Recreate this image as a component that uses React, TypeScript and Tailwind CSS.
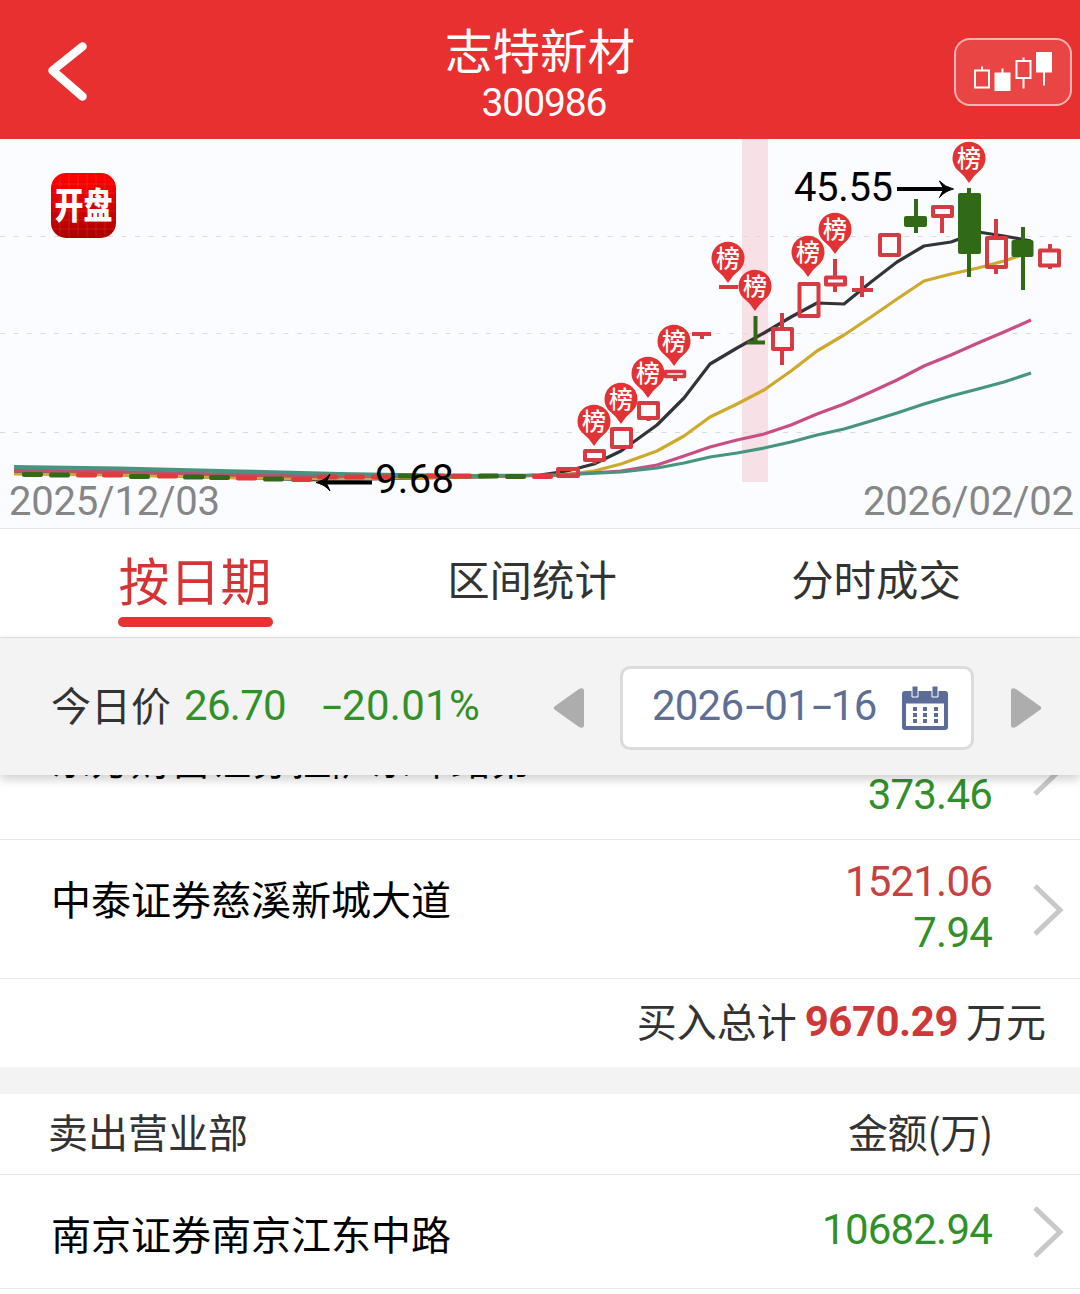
const CJK = "font-['Noto_Sans_CJK_SC',sans-serif]";

const MA_BLACK = '14,473 130,475 250,478 320,480 420,478 480,477 540,475 567,471 594,464 621,451 657,425 684,398 710,364 737,348 764,333 791,317 817,303 844,304 871,282 897,262 924,246 951,242 978,232 1004,236 1031,241';
const MA_GOLD = '14,474 120,475 240,478 340,479 460,477 560,475 594,471 621,464 657,451 684,436 710,417 737,404 764,390 791,371 817,351 844,335 871,317 897,299 924,281 951,274 978,268 1004,261 1031,252';
const MA_PINK = '14,470 120,471.5 240,474.5 340,476.5 460,476.5 560,475 621,471 657,465 684,456 710,447 737,440 764,434 791,425 817,414 844,404 871,392 897,380 924,366 951,355 978,343 1004,332 1031,320';
const MA_TEAL = '14,466.5 120,468 240,471 340,473.5 460,475.5 560,475 621,472 657,468 684,463 710,457 737,453 764,448 791,442 817,435 844,429 871,421 897,413 924,404 951,396 978,389 1004,382 1031,373';

const PINS = [
  [594, 421], [621, 399], [648, 373], [674, 341], [728, 258], [755, 286], [808, 252], [835, 229], [969, 158],
];

const DASHES: [number, number, number][] = [
  [22, 474.5, 0], [49, 475, 0], [76, 475, 1], [102, 475, 1], [129, 476.5, 0], [157, 476, 1], [183, 477, 0], [209, 477.5, 0],
  [236, 478, 1], [263, 479, 0], [291, 479.5, 1], [317, 477, 1], [344, 477, 1], [371, 477, 1], [398, 476, 0], [425, 476, 1], [451, 476, 1], [478, 476, 0], [505, 476.5, 0], [532, 476.5, 1],
];

function Chart() {
  return (
    <svg width="1080" height="389" viewBox="0 139 1080 389" className="block bg-[#fbfcff]">
      <rect x="742" y="139" width="26" height="343" fill="#f7e0e6" />
      <g stroke="#d9dade" strokeWidth="1" strokeDasharray="5 8.500">
        <path d="M0 236.500H1080M0 333.500H1080M0 432.500H1080" />
      </g>
      <g fill="none" strokeWidth="3.200" strokeLinejoin="round">
        <polyline points={MA_BLACK} stroke="#333338" />
        <polyline points={MA_GOLD} stroke="#cfa82c" />
        <polyline points={MA_PINK} stroke="#c94e86" />
        <polyline points={MA_TEAL} stroke="#46957f" />
        <path d="M14 467.500L120 469L240 472L340 474.500L460 476" stroke="#46957f" />
        <path d="M14 471L120 472L240 475L340 477" stroke="#b8536f" />
      </g>
      {DASHES.map(([x, y, up]) => (
        <rect key={x} x={x} y={y - 2.5} width="21" height="5" rx="2" fill={up ? '#e03a3c' : '#34691a'} />
      ))}
      <g fill="none" stroke="#d53b40" strokeWidth="4" strokeLinejoin="round">
        <rect x="558" y="469" width="20" height="7" />
        <path d="M585 451h19v9h-19zM594.500 460v4" />
        <path d="M612 429h19v18h-19z" fill="#fbfcff" />
        <path d="M639 403h19v15h-19zM648.500 418v3" />
        <rect x="665.500" y="371.500" width="19" height="5" strokeWidth="3.500" />
        <path d="M675 377v4M692 334h19M702 334v5M719 287h19" />
        <path d="M773 329h19v20h-19z" fill="#fbfcff" />
        <path d="M782 313v16M782 349v16" />
        <rect x="799.500" y="284" width="19" height="32" />
        <path d="M826 277.500h19v7h-19zM835 259v18M835 285v7" />
        <path d="M852 290h21M862 276v21" />
        <rect x="880" y="235" width="19" height="20" />
        <path d="M933 207h19v9h-19zM942 216v17" />
        <rect x="987" y="238" width="19" height="29" />
        <path d="M996 219v19M996 267v7M1040 250.500h19v15h-19zM1050 244v6M1050 266v3" />
      </g>
      <g stroke="#306a16" strokeWidth="4" fill="#306a16">
        <path d="M755.500 316v26M747 342.500h18" />
        <path d="M916 199v34M969 188v89M1023 227v63" />
        <rect x="906" y="218" width="19" height="7" strokeLinejoin="round" />
        <rect x="960" y="195" width="19" height="57" strokeLinejoin="round" />
        <rect x="1013.500" y="242" width="18" height="13" strokeLinejoin="round" />
      </g>
      {PINS.map(([x, y]) => (
        <g key={x}>
          <path d={`M${x - 12.5} ${y + 11}A16.500 16.500 0 1 1 ${x + 12.5} ${y + 11}Q${x + 5} ${y + 17} ${x} ${y + 25}Q${x - 5} ${y + 17} ${x - 12.5} ${y + 11}Z`} fill="#e23234" />
          <text x={x} y={y + 8.5} textAnchor="middle" fontSize="24" fill="#fff" className="font-['Noto_Sans_CJK_SC',sans-serif] font-medium">榜</text>
        </g>
      ))}
      <g stroke="#000">
        <path d="M897 189H950" strokeWidth="4" />
        <path d="M939.500 181Q945 187 953.500 189Q945 191 939.500 197.500Q942 192 944 189Q942 186 939.500 181Z" strokeWidth="1" />
        <path d="M372 482.500H320" strokeWidth="4" />
        <path d="M330 474Q325 480.500 316 482.500Q325 484.500 330 491Q328 486 326 482.500Q328 479 330 474Z" strokeWidth="1" />
      </g>
      <g className="font-[Roboto,sans-serif]" fontSize="40">
        <text x="794" y="200.500" textLength="99">45.55</text>
        <text x="375" y="493" textLength="79">9.68</text>
        <text x="9" y="515" textLength="211" fill="#868688">2025/12/03</text>
        <text x="863" y="515" textLength="211" fill="#868688">2026/02/02</text>
      </g>
      <defs>
        <linearGradient id="badge" x1="0" y1="0" x2="0" y2="1">
          <stop offset="0.1" stopColor="#fb0000" />
          <stop offset="1" stopColor="#ab0000" />
        </linearGradient>
      </defs>
      <rect x="51" y="173" width="65" height="65" rx="15" fill="url(#badge)" />
      <path d="M60 174v63M69 174v63M78 174v63M87 174v63M96 174v63M105 174v63M52 184h63M52 193h63M52 202h63M52 211h63M52 220h63M52 229h63" stroke="#fff" strokeOpacity="0.1" />
      <text x="54.500" y="219" textLength="58" lengthAdjust="spacingAndGlyphs" fontSize="36" fill="#fff" className="font-['Noto_Sans_CJK_SC',sans-serif] font-black">开盘</text>
    </svg>
  );
}

function Chevron() {
  return (
    <svg width="32" height="54" viewBox="0 0 32 54" className="block" fill="none" stroke="#c8c8c8" strokeWidth="5">
      <path d="M3 3L28 27L3 51" />
    </svg>
  );
}

function Hyphen() {
  return <span className="inline-block w-[21px] scale-x-[1.7] text-center indent-[1px]">-</span>;
}

function Num({ children, className }: { children: React.ReactNode; className: string }) {
  return <span className={`block whitespace-nowrap font-[Roboto,sans-serif] text-[42px] ${className}`}>{children}</span>;
}

export default function App() {
  return (
    <div className={`h-[1294px] w-[1080px] overflow-hidden bg-white ${CJK}`}>
      <header className="grid h-[139px] grid-cols-[1fr_auto_1fr] bg-[#e83030] text-white">
        <button className="ml-[46px] mt-10 justify-self-start self-start">
          <svg width="44" height="64" viewBox="0 0 44 64" fill="none" stroke="#fff" strokeWidth="8.500" strokeLinecap="round" strokeLinejoin="round">
            <path d="M36.500 6.500L6.500 30.500L36.500 56.500" />
          </svg>
        </button>
        <div className="flex flex-col items-center">
          <h1 className="mt-[19px] text-[47.500px] leading-[60px]">志特新材</h1>
          <span className="ml-2 mt-1 font-[Roboto,sans-serif] text-[39px] leading-[40px] tracking-[-1.1px]">300986</span>
        </div>
        <button className="mr-[8.500px] mt-[37.500px] h-[68px] w-[118px] justify-self-end rounded-2xl border-2 border-white/60 bg-white/10">
          <svg width="114" height="64" viewBox="955.500 39.500 114 64" fill="none" stroke="#fff" strokeWidth="2">
            <path d="M974.500 70h14v17h-14zM981.500 66v4M1016 60.500h14v17h-14zM1023 57v4M1023 78v10M1002 68v5M1043.500 71v14" />
            <path d="M994 72h16v18.500h-16zM1035.500 51.500h16v20.500h-16z" fill="#fff" stroke="none" />
          </svg>
        </button>
      </header>

      <Chart />

      <nav className="grid h-[110px] grid-cols-[390px_284px_406px] border-y border-[#e6e6e6] text-[42.400px] leading-[60px] text-[#333]">
        <div className="flex flex-col items-center">
          <span className="mt-[20px] text-[51px] leading-[60px] text-[#d53434]">按日期</span>
          <span className="mt-[8px] h-[10px] w-[155px] rounded-full bg-[#e63232]" />
        </div>
        <span className="mt-[19px] text-center">区间统计</span>
        <span className="mr-0.5 mt-[19px] text-center">分时成交</span>
      </nav>

      <section className="relative z-10 flex h-[137px] items-start bg-[#f3f3f3] text-[40px] text-[#333] shadow-[0_4px_10px_rgba(0,0,0,0.2)]">
        <span className="ml-[51px] mt-[36px] leading-[60px]">今日价</span>
        <Num className="ml-[13px] mt-[38px] w-[105px] leading-[60px] tracking-[-0.7px] text-[#32902a]">26.70</Num>
        <Num className="ml-[32px] mt-[38px] w-[162px] leading-[60px] tracking-[0.3px] text-[#32902a]"><Hyphen />20.01%</Num>
        <svg width="32" height="40" viewBox="0 0 32 40" className="ml-[70px] mt-[50px] shrink-0" fill="#adadad">
          <path d="M1.500 18.500L26 1Q31 -1 31 3V37Q31 41 26 39L1.500 21.500Q0 20 1.500 18.500Z" />
        </svg>
        <div className="ml-[35px] mt-[28px] flex h-[84px] w-[354px] shrink-0 rounded-[10px] border-[3px] border-[#dbdbdb] bg-white">
          <Num className="ml-[29px] mt-[7px] w-[225px] leading-[60px] tracking-[-0.8px] text-[#5e6f95]">2026<Hyphen />01<Hyphen />16</Num>
          <svg width="46" height="44" viewBox="0 0 46 44" className="ml-[25px] mt-[17px]" fill="#5b6c9b">
            <path fillRule="evenodd" d="M3 5H43Q46 5 46 8V41Q46 44 43 44H3Q0 44 0 41V8Q0 5 3 5ZM4 17.500V40H42V17.500Z" />
            <path d="M10 0h6v11h-6zM30 0h6v11h-6z" stroke="#fff" />
            <path d="M11 21h4v4h-4zM21 21h4v4h-4zM32 21h4v4h-4zM11 27h4v4h-4zM21 27h4v4h-4zM32 27h4v4h-4zM11 33h4v4h-4zM21 33h4v4h-4zM32 33h4v4h-4z" />
          </svg>
        </div>
        <svg width="32" height="40" viewBox="0 0 32 40" className="ml-[36px] mt-[50px] shrink-0 -scale-x-100" fill="#adadad">
          <path d="M1.500 18.500L26 1Q31 -1 31 3V37Q31 41 26 39L1.500 21.500Q0 20 1.500 18.500Z" />
        </svg>
      </section>

      <section className="flex h-[292px] flex-col justify-end overflow-hidden text-[40px]">
        <div className="flex h-[140px] shrink-0 border-b border-[#e8e8e8]">
          <span className="ml-[51px] mt-[28px] flex-1 leading-[60px] text-black">东方财富证券拉萨东环路第</span>
          <div className="mt-[18px] flex flex-col items-end">
            <Num className="leading-[51px] tracking-[-0.8px] text-[#c94040]">1539.22</Num>
            <Num className="leading-[51px] tracking-[-0.8px] text-[#32902a]">373.46</Num>
          </div>
          <div className="ml-[40px] mr-4 mt-[43px]"><Chevron /></div>
        </div>
        <div className="flex h-[139px] shrink-0 border-b border-[#e8e8e8]">
          <span className="ml-[51px] mt-[28px] flex-1 leading-[60px] text-black">中泰证券慈溪新城大道</span>
          <div className="mt-[16px] flex flex-col items-end">
            <Num className="leading-[51px] tracking-[-0.8px] text-[#c94040]">1521.06</Num>
            <Num className="leading-[51px] tracking-[-0.8px] text-[#32902a]">7.94</Num>
          </div>
          <div className="ml-[40px] mr-4 mt-[43px]"><Chevron /></div>
        </div>
        <div className="flex h-[88px] shrink-0 justify-end pr-[34px] text-[#333]">
          <span className="mt-[11px] leading-[60px]">买入总计</span>
          <Num className="ml-2 mr-2 mt-[13px] font-bold leading-[60px] tracking-[-0.5px] text-[#cf3838]">9670.29</Num>
          <span className="mt-[11px] leading-[60px]">万元</span>
        </div>
      </section>

      <div className="h-[27px] bg-[#f3f3f3]" />
      <section className="text-[40px] text-[#333]">
        <div className="flex h-[81px] justify-between border-b border-[#e8e8e8] pl-12 pr-[87px] leading-[60px]">
          <span className="mt-[7px]">卖出营业部</span>
          <span className="mt-[7px] tracking-[-0.4px]">金额(万)</span>
        </div>
        <div className="flex h-[114px] border-b border-[#e8e8e8]">
          <span className="ml-[51px] mt-[28px] flex-1 leading-[60px] text-black">南京证券南京江东中路</span>
          <Num className="mt-[25px] leading-[60px] tracking-[-0.8px] text-[#32902a]">10682.94</Num>
          <div className="ml-[40px] mr-4 mt-[30px]"><Chevron /></div>
        </div>
      </section>
    </div>
  );
}
